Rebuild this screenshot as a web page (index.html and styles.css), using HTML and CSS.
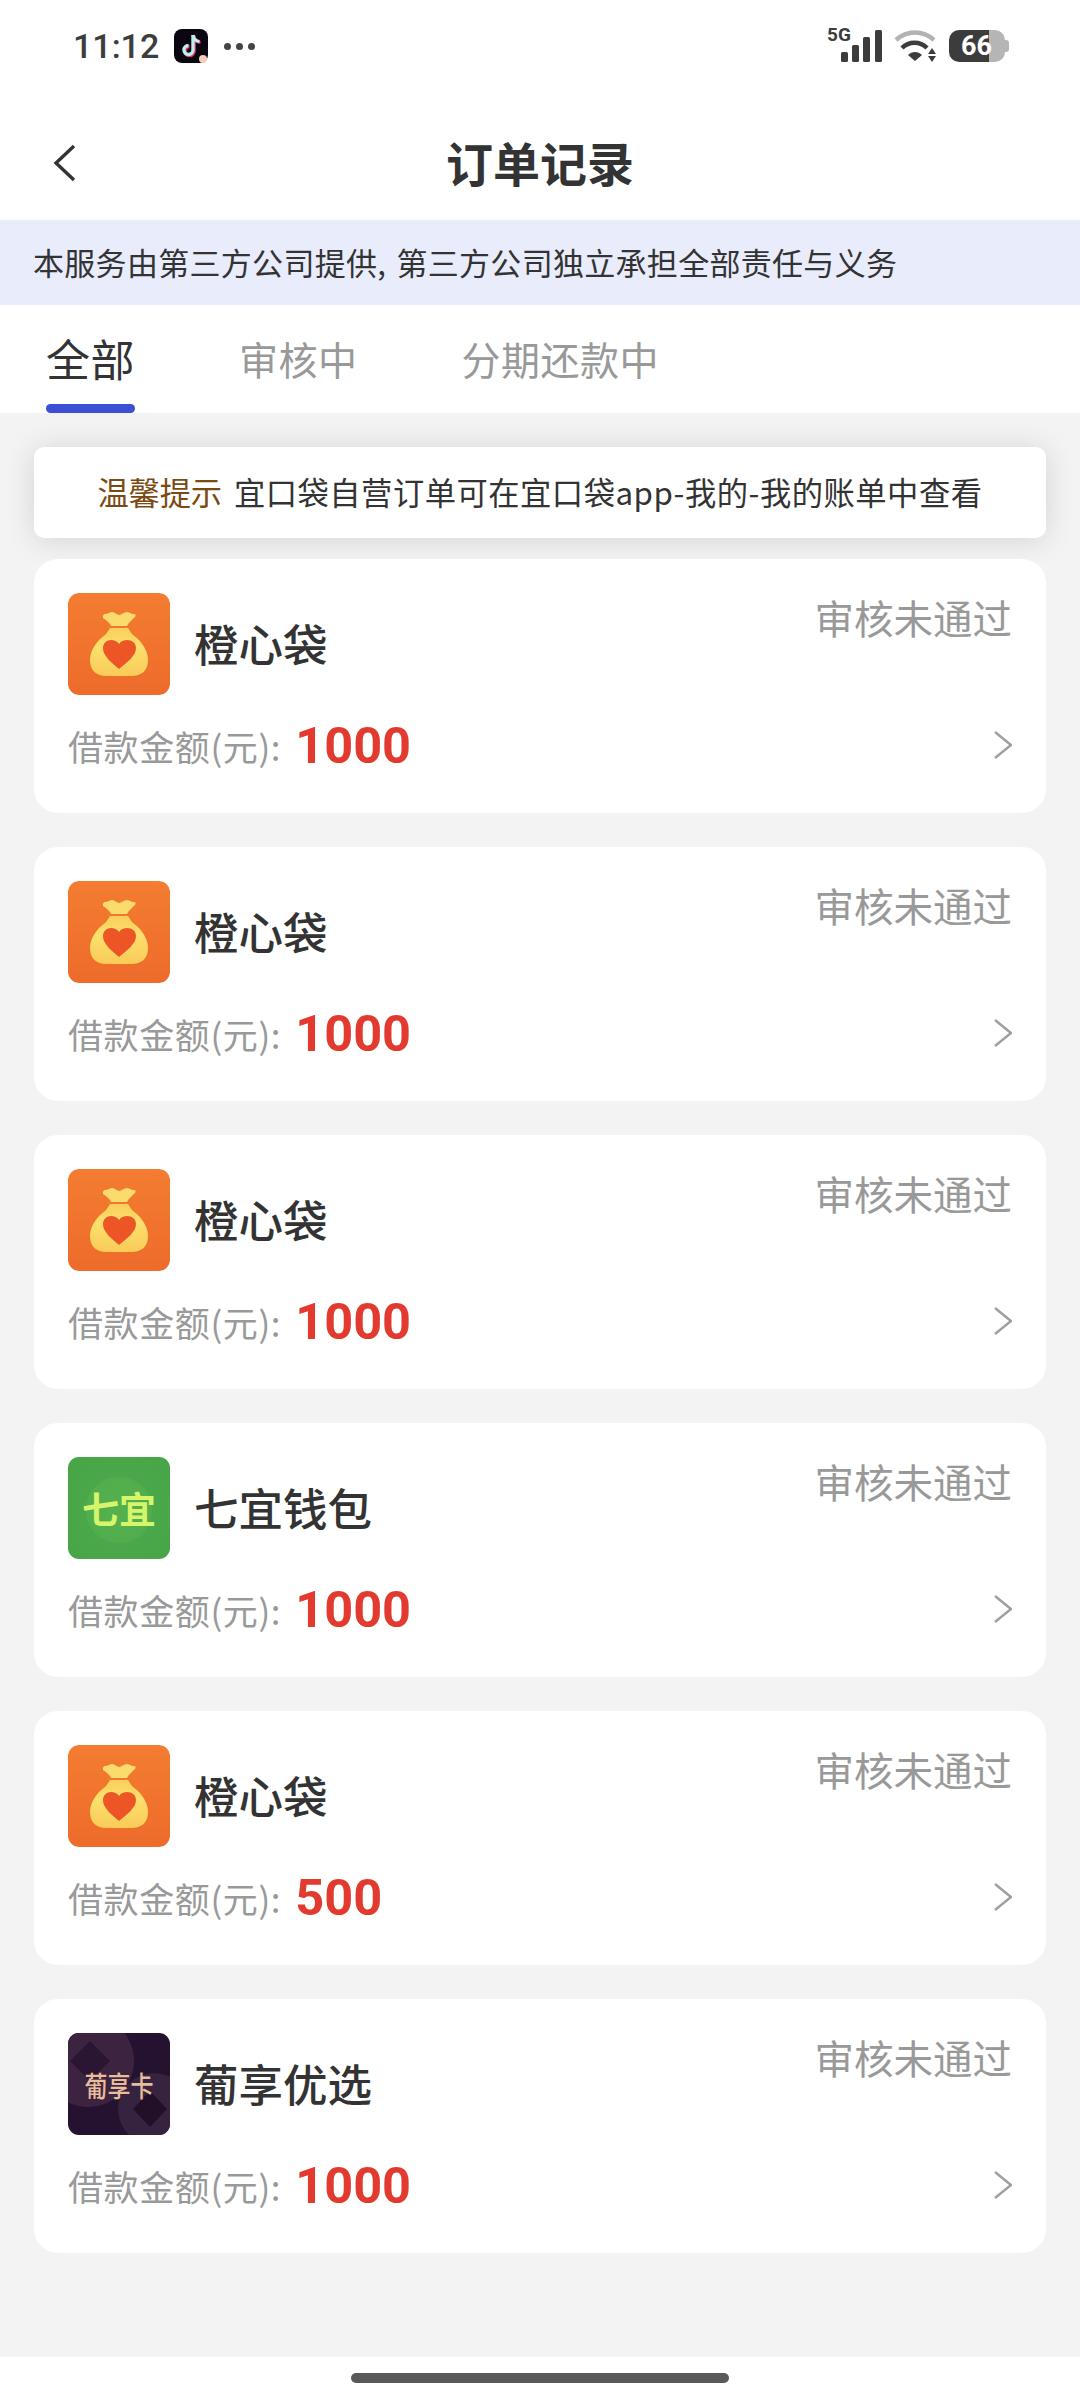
FILE: index.html
```html
<!DOCTYPE html>
<html lang="zh-CN">
<head>
    <meta charset="UTF-8">
    <meta name="viewport" content="width=device-width, initial-scale=1.0">
    <title>订单记录</title>
    <link rel="stylesheet" href="styles.css">
</head>
<body>
    <svg class="defs" width="0" height="0">
        <defs>
            <linearGradient id="bagbg" x1="0" y1="0" x2="0" y2="1">
                <stop offset="0" stop-color="#f37d30"/>
                <stop offset="1" stop-color="#ee6b2b"/>
            </linearGradient>
            <linearGradient id="bagfill" x1="0" y1="0" x2="0" y2="1">
                <stop offset="0" stop-color="#f8d058"/>
                <stop offset="0.4" stop-color="#fcdf6e"/>
                <stop offset="1" stop-color="#f9cb56"/>
            </linearGradient>
            <symbol id="bag" viewBox="0 0 102 102">
                <rect width="102" height="102" rx="11" fill="url(#bagbg)"/>
                <path d="M35 23c0-1 1-2 2-2 3 0 5-2 7-2 3 0 5 3 7 3s5-3 8-3c2 0 4 2 7 2 2 0 2 2 1 3-3 3-6 5-8 9H43c-2-4-5-6-8-8-.3-.5 0-1 0-2z" fill="#fbdb6c"/>
                <path d="M42 35h18c2 3 3 5 5 7 9 6 15 16 15 25 0 11-7 16-16 16H38c-9 0-16-5-16-16 0-9 6-19 15-25 2-2 3-4 5-7z" fill="url(#bagfill)"/>
                <path d="M51 76C43 69 35 63 35 55c0-5 4-8 8-8 3 0 6 1 8 4 2-3 5-4 8-4 5 0 9 3 9 8 0 8-9 14-17 21z" fill="#ee5526"/>
            </symbol>
            <symbol id="chev" viewBox="0 0 22 32">
                <path d="M5 3l16 13L5 29" fill="none" stroke="#a0a0a0" stroke-width="2.6"/>
            </symbol>
        </defs>
    </svg>

    <div class="statusbar">
        <div class="status-left">
            <span class="time">11:12</span>
            <span class="tt-icon">
                <svg width="34" height="34" viewBox="0 0 34 34">
                    <rect width="34" height="34" rx="8" fill="#0b0710"/>
                    <path d="M19 6v15a4.500 4.500 0 1 1-4.500-4.500" fill="none" stroke="#e8345a" stroke-width="3.600" transform="translate(1 1)"/>
                    <path d="M19 6c.5 3.500 3 6 6.500 6.500" fill="none" stroke="#e8345a" stroke-width="3.200" transform="translate(1 1)"/>
                    <path d="M19 6v15a4.500 4.500 0 1 1-4.500-4.500" fill="none" stroke="#bdeef0" stroke-width="3.400"/>
                    <path d="M19 6c.5 3.500 3 6 6.500 6.500" fill="none" stroke="#bdeef0" stroke-width="3"/>
                    <circle cx="29" cy="30" r="4" fill="#f6cdbd"/>
                </svg>
            </span>
            <span class="dots"><i></i><i></i><i></i></span>
        </div>
        <div class="status-right">
            <svg class="signal" width="56" height="44" viewBox="0 -8 56 44">
                <text x="0" y="13" class="fiveg">5G</text>
                <rect x="14" y="24" width="7" height="10" rx="1.500"/>
                <rect x="25" y="17" width="7" height="17" rx="1.500"/>
                <rect x="36" y="9" width="7" height="25" rx="1.500"/>
                <rect x="48" y="2" width="7" height="32" rx="1.500"/>
            </svg>
            <svg class="wifi" width="46" height="34" viewBox="0 0 46 34">
                <path d="M3 11C14 1 30 1 41 11" fill="none" stroke="#b3b3b3" stroke-width="4.500"/>
                <path d="M9 19c7-7 18-7 25 0" fill="none" stroke="#3c3c3c" stroke-width="4.500"/>
                <path d="M15 26c4-4 10-4 14 0l-7 6z" fill="#3c3c3c"/>
                <path d="M39 19l4 6h-8zM39 33l-4-6h8z" fill="#3c3c3c"/>
            </svg>
            <div class="battery">
                <span class="batt-num">66</span>
                <span class="batt-rest"></span>
                <span class="batt-nub"></span>
            </div>
        </div>
    </div>

    <div class="navbar">
        <svg class="back" width="24" height="38" viewBox="0 0 24 38">
            <path d="M21 2L3 19l18 17" fill="none" stroke="#333" stroke-width="3.400"/>
        </svg>
        <h1 class="navtitle">订单记录</h1>
    </div>

    <div class="banner">本服务由第三方公司提供, 第三方公司独立承担全部责任与义务</div>

    <div class="tabs">
        <div class="tab tab-active">全部</div>
        <div class="tab">审核中</div>
        <div class="tab">分期还款中</div>
    </div>

    <div class="list">
        <div class="notice"><span class="notice-tag">温馨提示</span>宜口袋自营订单可在宜口袋app-我的-我的账单中查看</div>

        <div class="order">
            <div class="order-top">
                <svg class="logo"><use href="#bag"/></svg>
                <span class="name">橙心袋</span>
                <span class="status">审核未通过</span>
            </div>
            <div class="order-bottom">
                <span class="label">借款金额(元):</span>
                <span class="amount">1000</span>
                <svg class="chev"><use href="#chev"/></svg>
            </div>
        </div>

        <div class="order">
            <div class="order-top">
                <svg class="logo"><use href="#bag"/></svg>
                <span class="name">橙心袋</span>
                <span class="status">审核未通过</span>
            </div>
            <div class="order-bottom">
                <span class="label">借款金额(元):</span>
                <span class="amount">1000</span>
                <svg class="chev"><use href="#chev"/></svg>
            </div>
        </div>

        <div class="order">
            <div class="order-top">
                <svg class="logo"><use href="#bag"/></svg>
                <span class="name">橙心袋</span>
                <span class="status">审核未通过</span>
            </div>
            <div class="order-bottom">
                <span class="label">借款金额(元):</span>
                <span class="amount">1000</span>
                <svg class="chev"><use href="#chev"/></svg>
            </div>
        </div>

        <div class="order">
            <div class="order-top">
                <div class="logo logo-green"><span>七宜</span></div>
                <span class="name">七宜钱包</span>
                <span class="status">审核未通过</span>
            </div>
            <div class="order-bottom">
                <span class="label">借款金额(元):</span>
                <span class="amount">1000</span>
                <svg class="chev"><use href="#chev"/></svg>
            </div>
        </div>

        <div class="order">
            <div class="order-top">
                <svg class="logo"><use href="#bag"/></svg>
                <span class="name">橙心袋</span>
                <span class="status">审核未通过</span>
            </div>
            <div class="order-bottom">
                <span class="label">借款金额(元):</span>
                <span class="amount">500</span>
                <svg class="chev"><use href="#chev"/></svg>
            </div>
        </div>

        <div class="order">
            <div class="order-top">
                <div class="logo logo-dark">
                    <svg class="logo-art" width="102" height="102" viewBox="0 0 102 102">
                        <rect width="102" height="102" fill="#251231"/>
                        <circle cx="20" cy="28" r="46" fill="#3c2340"/>
                        <circle cx="86" cy="76" r="36" fill="#35233f"/>
                        <path d="M22 8l20 20-20 20L2 28z" fill="#2a1532"/>
                        <path d="M82 58l17 18-17 18-17-18z" fill="#221029"/>
                    </svg>
                    <span>葡享卡</span>
                </div>
                <span class="name">葡享优选</span>
                <span class="status">审核未通过</span>
            </div>
            <div class="order-bottom">
                <span class="label">借款金额(元):</span>
                <span class="amount">1000</span>
                <svg class="chev"><use href="#chev"/></svg>
            </div>
        </div>
    </div>

    <div class="footer"><div class="homebar"></div></div>
</body>
</html>
```

FILE: styles.css
```css
* {
    box-sizing: border-box;
}

body {
    margin: 0;
    width: 1080px;
    height: 2400px;
    display: flex;
    flex-direction: column;
    background-color: #fff;
    font-family: "Noto Sans CJK SC", "Noto Sans", sans-serif;
    color: #333;
    overflow: hidden;
}

.defs {
    position: absolute;
}

.statusbar {
    height: 92px;
    flex: none;
    padding: 0 71px 0 73px;
    display: flex;
    align-items: center;
    justify-content: space-between;
}

.status-left {
    display: flex;
    align-items: center;
}

.time {
    font-family: Roboto, sans-serif;
    font-weight: 500;
    font-size: 34px;
    color: #3d3d3d;
}

.tt-icon {
    display: flex;
    margin-left: 15px;
}

.dots {
    display: flex;
    gap: 5px;
    margin-left: 16px;
}

.dots i {
    width: 7px;
    height: 7px;
    border-radius: 50%;
    background-color: #444;
}

.status-right {
    display: flex;
    align-items: center;
}

.signal {
    margin-top: -8px;
}

.signal rect {
    fill: #3c3c3c;
}

.fiveg {
    font-family: Roboto, sans-serif;
    font-weight: 700;
    font-size: 19px;
    fill: #3c3c3c;
}

.wifi {
    margin-left: 10px;
}

.battery {
    display: flex;
    align-items: center;
    margin-left: 10px;
}

.batt-num {
    position: relative;
    z-index: 1;
    width: 40px;
    height: 32px;
    padding-left: 12px;
    background-color: #3c3c3c;
    border-radius: 10px 0 0 10px;
    color: #fff;
    font-family: Roboto, sans-serif;
    font-weight: 700;
    font-size: 27px;
    line-height: 32px;
    white-space: nowrap;
}

.batt-rest {
    width: 16px;
    height: 32px;
    background-color: #b5b5b5;
    border-radius: 0 10px 10px 0;
}

.batt-nub {
    width: 4px;
    height: 12px;
    background-color: #b5b5b5;
    border-radius: 0 3px 3px 0;
}

.navbar {
    height: 128px;
    flex: none;
    position: relative;
    display: flex;
    align-items: center;
    justify-content: center;
}

.back {
    position: absolute;
    left: 53px;
    top: 52px;
}

.navtitle {
    margin: 0;
    font-size: 47px;
    font-weight: 700;
    color: #333;
    line-height: 1;
    padding-top: 10px;
}

.banner {
    height: 85px;
    flex: none;
    padding-left: 33px;
    background-color: #e9ecfb;
    font-size: 31px;
    letter-spacing: 0.3px;
    word-spacing: 3px;
    line-height: 83px;
    color: #333;
    white-space: nowrap;
}

.tabs {
    height: 108px;
    flex: none;
    display: flex;
    padding-left: 46px;
    gap: 104px;
}

.tab {
    height: 108px;
    font-size: 39px;
    line-height: 106px;
    color: #999;
    letter-spacing: 0.5px;
}

.tab-active {
    position: relative;
    font-size: 44px;
    color: #333;
}

.tab-active::after {
    content: "";
    position: absolute;
    left: 0;
    right: 0;
    bottom: 0;
    height: 9px;
    border-radius: 5px;
    background-color: #3b50d4;
}

.list {
    flex: 1;
    background-color: #f3f3f3;
    padding: 34px 34px 0;
    display: flex;
    flex-direction: column;
    gap: 34px;
}

.notice {
    height: 91px;
    margin-bottom: -13px;
    background-color: #fff;
    border-radius: 10px;
    box-shadow: 0 2px 30px rgba(0, 0, 0, 0.13);
    text-align: center;
    font-size: 31.3px;
    letter-spacing: 0.5px;
    line-height: 89px;
    color: #333;
    white-space: nowrap;
}

.notice-tag {
    color: #7a4a14;
    letter-spacing: -0.2px;
    margin-right: 12px;
}

.order {
    height: 254px;
    flex: none;
    background-color: #fff;
    border-radius: 24px;
    padding: 34px 34px 0;
    position: relative;
}

.order-top {
    display: flex;
    align-items: center;
}

.logo {
    width: 102px;
    height: 102px;
    flex: none;
    border-radius: 11px;
}

.logo-green {
    display: flex;
    align-items: center;
    justify-content: center;
    background: radial-gradient(circle at 50% 52%, #55b04e 0, #52ad4c 44%, #4aa74a 46%, #47a547 100%);
    color: #d6f56a;
    font-size: 37px;
    font-weight: 700;
    letter-spacing: 0;
}

.logo-dark {
    position: relative;
    overflow: hidden;
    display: flex;
    align-items: center;
    justify-content: center;
    color: #e8bd9c;
    font-size: 23px;
    font-weight: 500;
}

.logo-art {
    position: absolute;
    left: 0;
    top: 0;
}

.logo-dark span {
    position: relative;
    transform: scaleY(1.25);
}

.name {
    margin-left: 24px;
    margin-top: -2px;
    font-size: 44.5px;
    font-weight: 500;
    line-height: 1;
    color: #333;
}

.status {
    position: absolute;
    right: 34px;
    top: 34px;
    font-size: 39.5px;
    line-height: 1.2;
    color: #999;
}

.order-bottom {
    display: flex;
    align-items: center;
    margin-top: 5px;
    height: 90px;
}

.label {
    font-size: 35px;
    color: #999;
    letter-spacing: 0.6px;
}

.amount {
    margin-left: 14px;
    font-family: Roboto, sans-serif;
    font-weight: 700;
    font-size: 50.5px;
    color: #e23a2e;
}

.chev {
    width: 22px;
    height: 32px;
    margin-left: auto;
}

.footer {
    height: 43px;
    flex: none;
    display: flex;
    justify-content: center;
    padding-top: 16px;
    background-color: #fff;
}

.homebar {
    width: 378px;
    height: 10px;
    border-radius: 5px;
    background-color: #595959;
}
```
